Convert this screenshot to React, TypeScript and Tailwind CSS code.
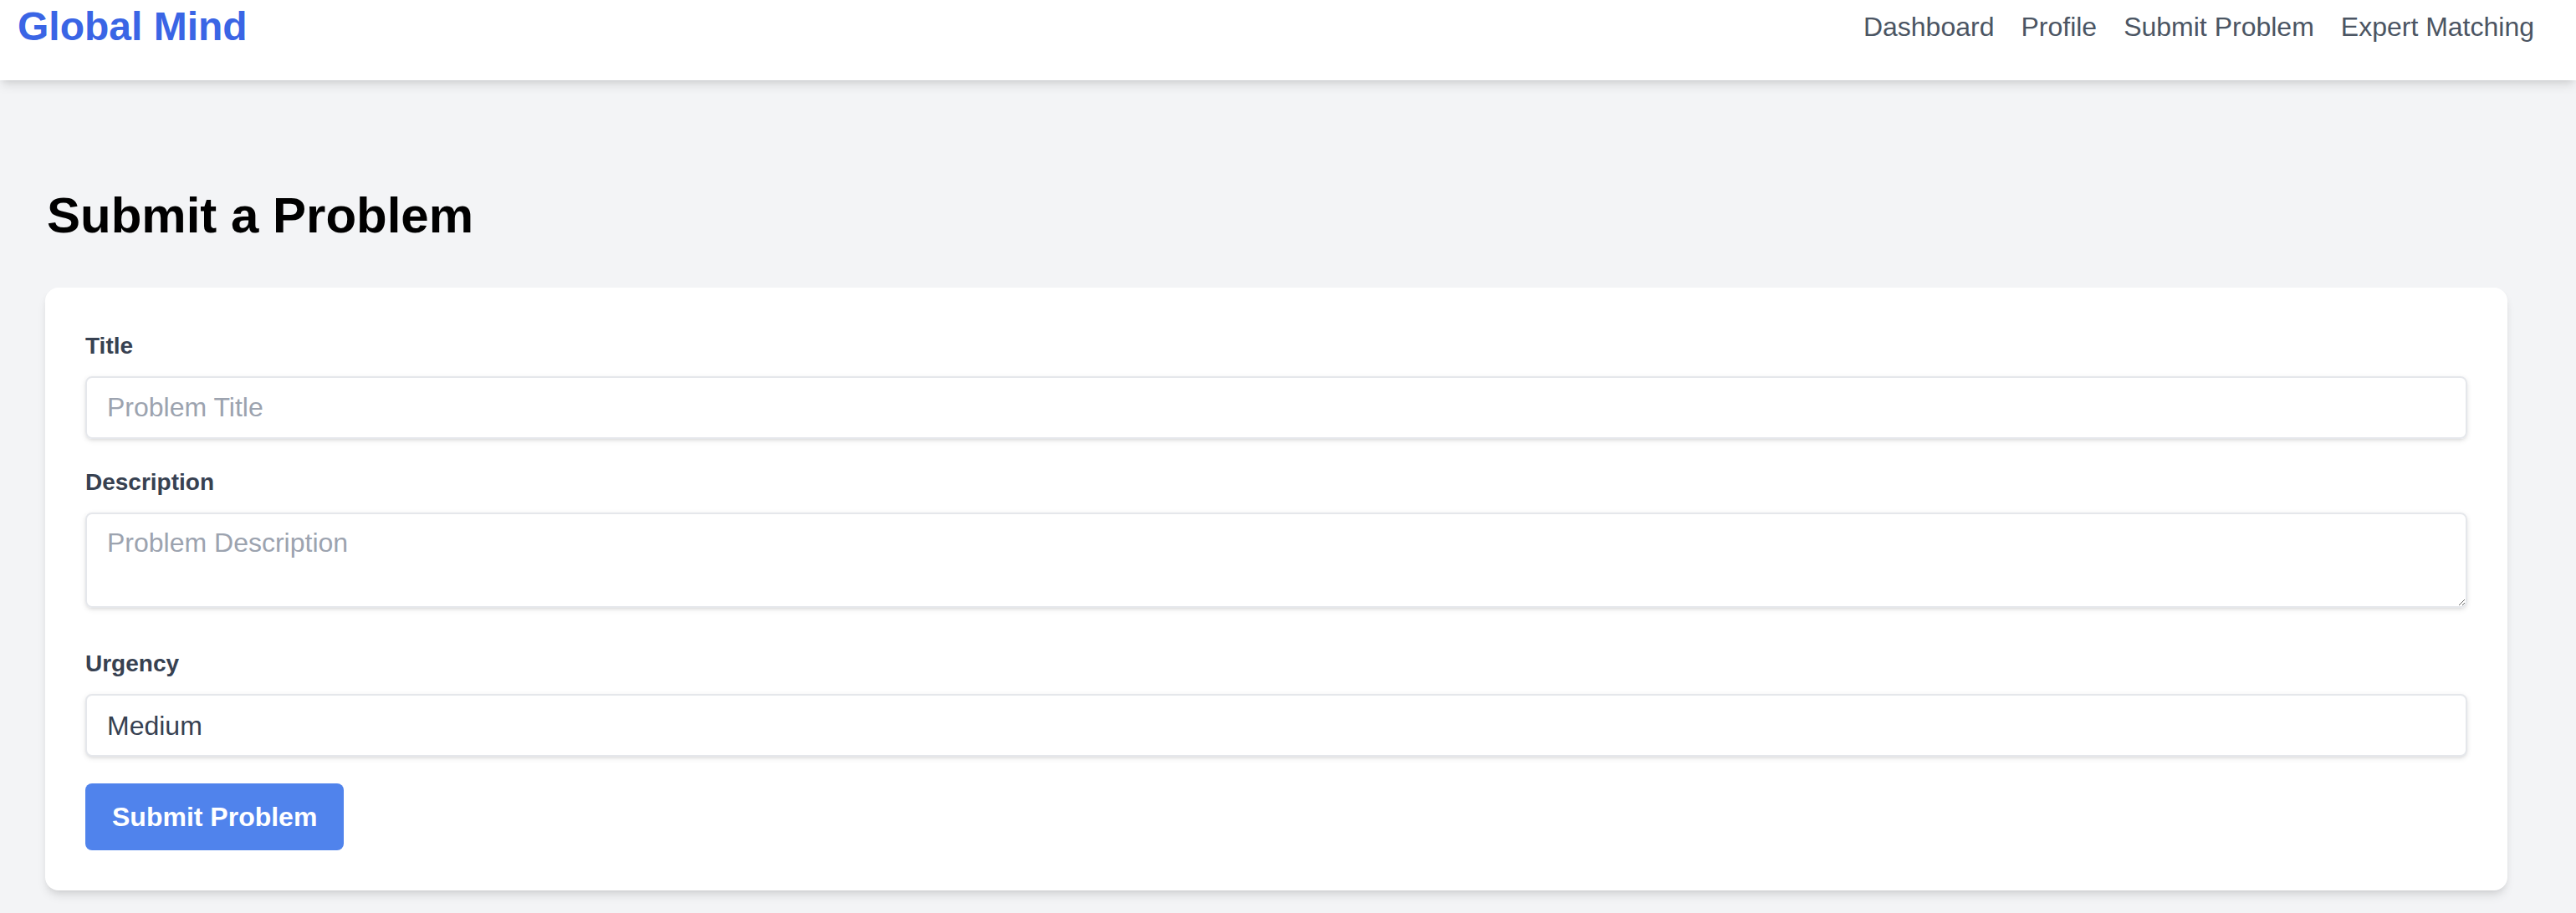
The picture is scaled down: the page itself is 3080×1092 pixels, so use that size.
import { useState } from "react"

const navLinks = ["Dashboard", "Profile", "Submit Problem", "Expert Matching"]

export default function App() {
  const [title, setTitle] = useState("")
  const [description, setDescription] = useState("")
  const [urgency, setUrgency] = useState("Medium")

  return (
    <div className="min-h-screen bg-[#f3f4f6] font-['Liberation_Sans',Arial,sans-serif] text-[32px] leading-[48px]">
      {/* Top bar */}
      <header className="bg-white pb-[32px] pl-[21px] pr-[50px] shadow-[0_8px_12px_-2px_rgba(0,0,0,0.1),0_4px_8px_-4px_rgba(0,0,0,0.1)]">
        <div className="flex h-[64px] items-center justify-between">
          <a href="#" className="text-[48px] font-bold leading-[64px] text-[#3a65e5]">
            Global Mind
          </a>
          <nav className="flex gap-[32px] text-[#4b5563]">
            {navLinks.map((link) => (
              <a key={link} href="#" className="hover:text-black">
                {link}
              </a>
            ))}
          </nav>
        </div>
      </header>

      {/* Main */}
      <main className="pl-[54px] pr-[82px] pt-[126px] pb-[28px]">
        <h1 className="mb-[50px] pl-[2px] text-[60px] font-bold leading-[72px] text-black">Submit a Problem</h1>

        <form
          className="rounded-[16px] bg-white px-[48px] pt-[50px] pb-[48px] shadow-[0_8px_12px_-2px_rgba(0,0,0,0.1),0_4px_8px_-4px_rgba(0,0,0,0.1)]"
          onSubmit={(e) => e.preventDefault()}
        >
          <div className="mb-[32px]">
            <label className="mb-[16px] block text-[28px] font-bold leading-[40px] text-[#374151]">Title</label>
            <input
              type="text"
              placeholder="Problem Title"
              value={title}
              onChange={(e) => setTitle(e.target.value)}
              className="h-[75px] w-full rounded-[8px] border-2 border-[#e5e7eb] px-[24px] text-[#374151] shadow-[0_2px_6px_0_rgba(0,0,0,0.1),0_2px_4px_-2px_rgba(0,0,0,0.1)] placeholder:text-[#9ca3af] focus:outline-none"
            />
          </div>

          <div className="mb-[34px]">
            <label className="mb-[16px] block text-[28px] font-bold leading-[40px] text-[#374151]">Description</label>
            <textarea
              placeholder="Problem Description"
              value={description}
              onChange={(e) => setDescription(e.target.value)}
              className="h-[114px] w-full rounded-[8px] border-2 border-[#e5e7eb] px-[24px] py-[16px] leading-[37px] text-[#374151] shadow-[0_2px_6px_0_rgba(0,0,0,0.1),0_2px_4px_-2px_rgba(0,0,0,0.1)] placeholder:text-[#9ca3af] focus:outline-none"
            />
          </div>

          <div className="mb-[32px]">
            <label className="mb-[16px] block text-[28px] font-bold leading-[40px] text-[#374151]">Urgency</label>
            <select
              value={urgency}
              onChange={(e) => setUrgency(e.target.value)}
              className="h-[75px] w-full appearance-none rounded-[8px] border-2 border-[#e5e7eb] bg-white px-[24px] text-[#374151] shadow-[0_2px_6px_0_rgba(0,0,0,0.1),0_2px_4px_-2px_rgba(0,0,0,0.1)] focus:outline-none"
            >
              <option>Low</option>
              <option>Medium</option>
              <option>High</option>
            </select>
          </div>

          <button
            type="submit"
            className="rounded-[8px] bg-[#5083ec] px-[32px] py-[16px] font-bold leading-[48px] text-white hover:bg-[#3b6fdc]"
          >
            Submit Problem
          </button>
        </form>
      </main>
    </div>
  )
}
